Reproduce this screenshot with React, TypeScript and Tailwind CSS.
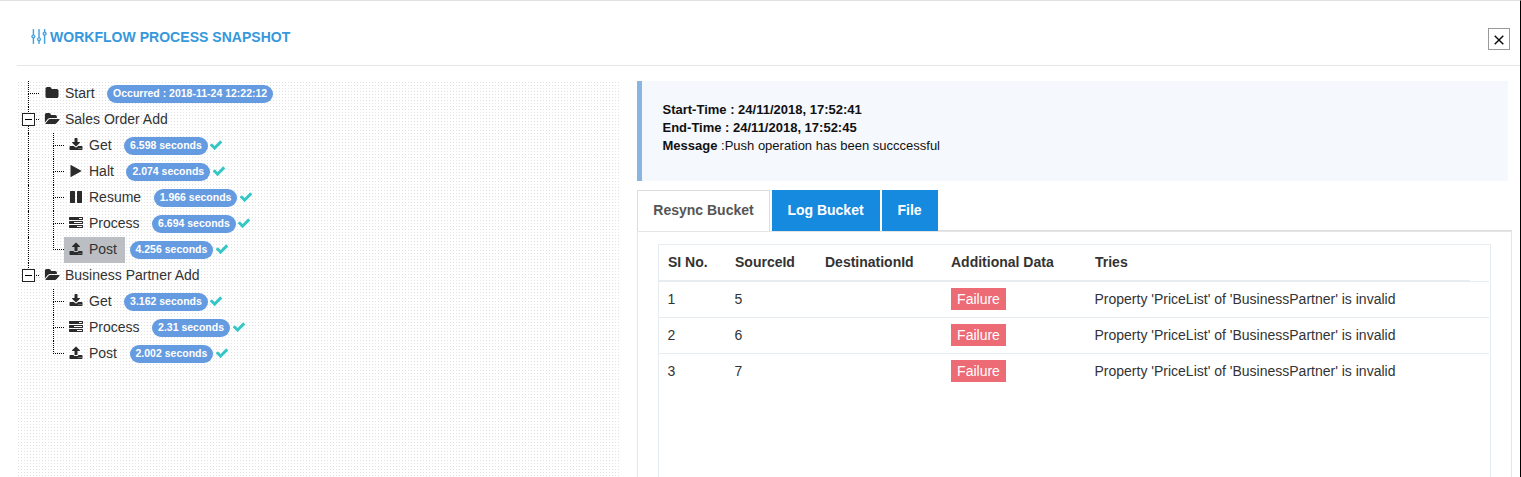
import type { ReactNode } from "react";
import { SlEqualizer } from "react-icons/sl";

const icons = {
  folder:
    "M1728 608v704q0 92-66 158t-158 66h-1216q-92 0-158-66t-66-158v-960q0-92 66-158t158-66h320q92 0 158 66t66 158v32h672q92 0 158 66t66 158z",
  open:
    "M1943 952q0 31-31 66l-336 396q-43 51-120.5 86.5t-143.5 35.5h-1088q-34 0-60.5-13t-26.5-43q0-31 31-66l336-396q43-51 120.5-86.5t143.5-35.5h1088q34 0 60.5 13t26.5 43zm-343-344v160h-832q-94 0-197 47.5t-164 119.5l-337 396-5 6q0-4-.5-12.5t-.5-12.5v-960q0-92 66-158t158-66h320q92 0 158 66t66 158v32h544q92 0 158 66t66 158z",
  download:
    "M1344 1344q0-26-19-45t-45-19-45 19-19 45 19 45 45 19 45-19 19-45zm256 0q0-26-19-45t-45-19-45 19-19 45 19 45 45 19 45-19 19-45zm128-224v320q0 40-28 68t-68 28h-1472q-40 0-68-28t-28-68v-320q0-40 28-68t68-28h465l135 136q58 56 136 56t136-56l136-136h464q40 0 68 28t28 68zm-325-569q17 41-14 70l-448 448q-18 19-45 19t-45-19l-448-448q-31-29-14-70 17-39 59-39h256v-448q0-26 19-45t45-19h256q26 0 45 19t19 45v448h256q42 0 59 39z",
  upload:
    "M1344 1472q0-26-19-45t-45-19-45 19-19 45 19 45 45 19 45-19 19-45zm256 0q0-26-19-45t-45-19-45 19-19 45 19 45 45 19 45-19 19-45zm128-224v320q0 40-28 68t-68 28h-1472q-40 0-68-28t-28-68v-320q0-40 28-68t68-28h427q21 56 70.5 92t110.5 36h256q61 0 110.5-36t70.5-92h427q40 0 68 28t28 68zm-325-648q-17 40-59 40h-256v448q0 26-19 45t-45 19h-256q-26 0-45-19t-19-45v-448h-256q-42 0-59-40-17-39 14-69l448-448q18-19 45-19t45 19l448 448q31 30 14 69z",
  play:
    "M1576 927l-1328 738q-23 13-39.5 3t-16.5-36v-1472q0-26 16.5-36t39.5 3l1328 738q23 13 23 31t-23 31z",
  pause:
    "M1664 192v1408q0 26-19 45t-45 19h-512q-26 0-45-19t-19-45v-1408q0-26 19-45t45-19h512q26 0 45 19t19 45zm-896 0v1408q0 26-19 45t-45 19h-512q-26 0-45-19t-19-45v-1408q0-26 19-45t45-19h512q26 0 45 19t19 45z",
  tasks:
    "M1024 1408h640v-128h-640v128zm-384-512h1024v-128h-1024v128zm640-512h384v-128h-384v128zm512 832v256q0 26-19 45t-45 19h-1664q-26 0-45-19t-19-45v-256q0-26 19-45t45-19h1664q26 0 45 19t19 45zm0-512v256q0 26-19 45t-45 19h-1664q-26 0-45-19t-19-45v-256q0-26 19-45t45-19h1664q26 0 45 19t19 45zm0-512v256q0 26-19 45t-45 19h-1664q-26 0-45-19t-19-45v-256q0-26 19-45t45-19h1664q26 0 45 19t19 45z",
  check:
    "M1671 566q0 40-28 68l-724 724-136 136q-28 28-68 28t-68-28l-136-136-362-362q-28-28-28-68t28-68l136-136q28-28 68-28t68 28l294 295 656-657q28-28 68-28t68 28l136 136q28 28 28 68z",
};

type IconName = keyof typeof icons;

function Icon({ name, className = "" }: { name: IconName; className?: string }) {
  const wide = name === "open";
  return (
    <svg
      viewBox={wide ? "0 0 1950 1792" : "0 0 1792 1792"}
      fill="currentColor"
      className={`${wide ? "h-3.5 w-4" : "size-3.5"} shrink-0 ${className}`}
    >
      <path d={icons[name]} />
    </svg>
  );
}

/* Dotted guide: upper half carries the branch, lower half continues the trunk. */
function Guide({ last = false }: { last?: boolean }) {
  return (
    <span className="flex h-full flex-1 flex-col">
      <span className="h-[13px] w-[11px] border-b border-l border-dotted border-black" />
      <span className={`flex-1 ${last ? "" : "border-l border-dotted border-black"}`} />
    </span>
  );
}

type Node = {
  label: string;
  icon: IconName;
  badge?: string;
  child?: boolean;
  last?: boolean;
  tail?: boolean;
  selected?: boolean;
};

const nodes: Node[] = [
  { label: "Start", icon: "folder", badge: "Occurred : 2018-11-24 12:22:12" },
  { label: "Sales Order Add", icon: "open" },
  { label: "Get", icon: "download", badge: "6.598 seconds", child: true },
  { label: "Halt", icon: "play", badge: "2.074 seconds", child: true },
  { label: "Resume", icon: "pause", badge: "1.966 seconds", child: true },
  { label: "Process", icon: "tasks", badge: "6.694 seconds", child: true },
  { label: "Post", icon: "upload", badge: "4.256 seconds", child: true, last: true, selected: true },
  { label: "Business Partner Add", icon: "open", last: true },
  { label: "Get", icon: "download", badge: "3.162 seconds", child: true, tail: true },
  { label: "Process", icon: "tasks", badge: "2.31 seconds", child: true, tail: true },
  { label: "Post", icon: "upload", badge: "2.002 seconds", child: true, tail: true, last: true },
];

function TreeRow({ node }: { node: Node }) {
  const parent = node.icon === "open";
  return (
    <li className="flex h-[26px] items-center">
      {node.child && (
        <span className="flex h-full w-6 shrink-0 pl-[11px]">
          <span className={`flex-1 ${node.tail ? "" : "border-l border-dotted border-black"}`} />
        </span>
      )}
      <span className={`relative flex h-full w-[23px] shrink-0 ${node.child ? "pl-3" : "pl-[11px]"}`}>
        <Guide last={node.last} />
        {parent && (
          <span className="absolute top-[6px] left-[5px] flex size-[13px] items-center justify-center border border-[#222] bg-white">
            <span className="h-px w-[7px] bg-black" />
          </span>
        )}
      </span>
      <span
        className={`flex h-[26px] items-center pr-2 pb-0.5 text-[14px] whitespace-nowrap text-[#333] ${
          node.selected ? "bg-[#bbbfc3]" : ""
        }`}
      >
        <span className="flex w-[25px] justify-center pr-0.5">
          <Icon name={node.icon} className="text-[#2b2b2b]" />
        </span>
        {node.label}
      </span>
      {node.badge && (
        <span className="ml-[4.5px] flex h-[18px] items-center rounded-full bg-[#659be0] px-[6px] pb-px text-[10.5px] font-bold whitespace-nowrap text-white">
          {node.badge}
        </span>
      )}
      {node.child && <Icon name="check" className="mb-0.5 ml-[1.5px] text-[#36c6c6]" />}
    </li>
  );
}

function Cell({ children }: { children?: ReactNode }) {
  return <span className="whitespace-nowrap">{children}</span>;
}

export default function App() {
  return (
    <div className="flex h-[477px] w-full flex-col overflow-hidden border-t border-r border-t-[#e2e2e2] border-r-black bg-white font-['Liberation_Sans',Arial,sans-serif]">
      <header className="ml-[17px] flex h-[65px] shrink-0 items-start justify-between border-b border-[#e7e7e7] pr-[10px]">
        <h1 className="mt-[27px] ml-[14px] flex items-center gap-[3px] text-[14px] leading-[18px] font-bold text-[#3598dc]">
          <SlEqualizer className="mb-px h-[15px] w-4" stroke="currentColor" strokeWidth={24} />
          <span className="tracking-[0.03px]">WORKFLOW PROCESS SNAPSHOT</span>
        </h1>
        <button className="mt-[27px] flex size-[22px] items-center justify-center border border-[#999] bg-white" aria-label="Close">
          <svg viewBox="0 0 10 10" className="mt-px size-[10px]" stroke="#111" strokeWidth="1.5">
            <path d="M.7 .7L9.3 9.3M9.3 .7L.7 9.3" />
          </svg>
        </button>
      </header>
      <main className="flex min-h-0 flex-1 gap-[17px] pt-[15px] pl-[17px]">
        <ul className="w-[603px] shrink-0 bg-[radial-gradient(circle_at_1.5px_1.5px,#e2e2e2_0.7px,transparent_0.8px)] bg-size-[3px_3px]">
          {nodes.map((n, i) => (
            <TreeRow key={i} node={n} />
          ))}
        </ul>
        <section className="flex min-w-0 flex-1 flex-col pr-2">
          <div className="mr-1 h-[100px] shrink-0 border-l-[5px] border-[#8ab4e2] bg-[#f5f8fd] pt-[20px] pl-[20.5px] text-[13px] leading-[18px] text-[#111]">
            <p className="font-bold">Start-Time : 24/11/2018, 17:52:41</p>
            <p className="font-bold">End-Time : 24/11/2018, 17:52:45</p>
            <p>
              <b>Message</b> :Push operation has been succcessful
            </p>
          </div>
          <nav className="mt-[9px] flex h-[41px] shrink-0 gap-0.5 text-[14px] font-bold">
            <span className="flex w-[133px] items-center justify-center border border-b-0 border-[#ddd] pb-px text-[#555]">Resync Bucket</span>
            <span className="flex w-[108px] items-center justify-center bg-[#168ade] pr-px text-white">Log Bucket</span>
            <span className="flex w-14 items-center justify-center bg-[#168ade] pr-px text-white">File</span>
            <span className="-ml-0.5 flex-1 border-b border-[#ddd]" />
          </nav>
          <div className="flex min-h-0 flex-1 border border-b-0 border-[#e5e5e5] px-5 pt-3">
            <div className="flex-1 border border-b-0 border-[#e7ecf1] text-[14px] text-[#333]">
              <div className="mr-5 grid h-[37px] grid-cols-[67px_90px_126px_144px_1fr] items-center border-b-2 border-[#e7ecf1] pl-[9px] font-bold">
                <Cell>SI No.</Cell>
                <Cell>SourceId</Cell>
                <Cell>DestinationId</Cell>
                <Cell>Additional Data</Cell>
                <Cell>Tries</Cell>
              </div>
              <div className="-mt-px mr-px border-t border-[#e7ecf1]">
                {["5", "6", "7"].map((source, i) => (
                  <div
                    key={source}
                    className="grid h-9 grid-cols-[67px_90px_126px_144px_1fr] items-center border-b border-[#e7ecf1] pl-[8.5px] last:border-transparent"
                  >
                    <Cell>{i + 1}</Cell>
                    <Cell>{source}</Cell>
                    <Cell />
                    <span className="mb-px ml-[0.5px] flex h-[22px] w-[55px] items-center justify-center bg-[#ed6b75] text-white">
                      Failure
                    </span>
                    <Cell>Property 'PriceList' of 'BusinessPartner' is invalid</Cell>
                  </div>
                ))}
              </div>
            </div>
          </div>
        </section>
      </main>
    </div>
  );
}
